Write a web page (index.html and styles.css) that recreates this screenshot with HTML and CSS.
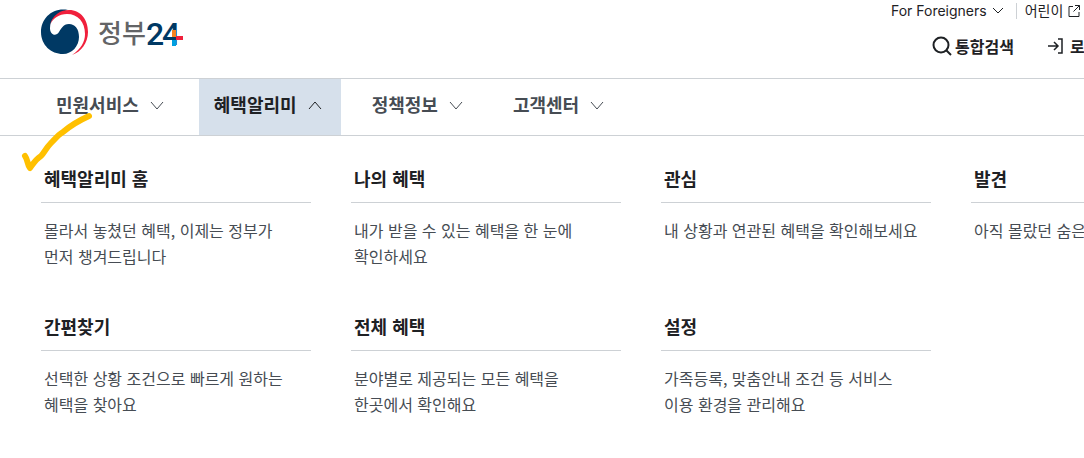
FILE: index.html
```html
<!DOCTYPE html>
<html lang="ko">
<head>
    <meta charset="UTF-8">
    <meta name="viewport" content="width=device-width, initial-scale=1.0">
    <title>정부24</title>
    <link rel="stylesheet" href="styles.css">
</head>
<body>
    <header class="header">
        <a href="#" class="logo">
            <svg class="logo-mark" viewBox="0 0 48 46" aria-hidden="true">
                <path fill="#003964" d="M27 1C12-2 0 9 0 23C0 36 10 45 22 45C31 45 38 37 38 28C38 20 34 15 28 15C22 15 20 20 18 23C15 28 9 26 9 19C9 10 16 4 27 1Z"/>
                <path fill="#f0203c" d="M9 16C12 5 20 1 28 1C40 1 47 11 47 23C47 34 40 43 31 46C40 40 44 33 44 25C44 13 37 5 26 5C18 5 12 9 9 16Z"/>
            </svg>
            <span class="logo-name">정부</span>
            <svg class="logo-number" viewBox="0 0 40 30" role="img" aria-label="24">
                <text class="logo-digits" y="28" x="0 16">24</text>
                <path fill="#f58220" d="M26 13h4v7h-4z"/>
                <path fill="#f0203c" d="M30 19h7v4h-7z"/>
                <path fill="#00a0e0" d="M26 23h4v6h-4z"/>
            </svg>
        </a>

        <div class="utils">
            <div class="util-top">
                <button type="button" class="util-link">For Foreigners
                    <svg class="icon-small" viewBox="0 0 12 12"><path d="M1 3l5 5 5-5"/></svg>
                </button>
                <a href="#" class="util-link util-kids">어린이
                    <svg class="icon-small" viewBox="0 0 12 12"><path d="M5 1.5H1v10h10V7M7 .5h4.5V5M11.5 .5l-6 6"/></svg>
                </a>
            </div>
            <div class="util-main">
                <button type="button" class="util-button">
                    <svg class="icon-search" viewBox="0 0 20 20"><circle cx="9" cy="9" r="7.5"/><path d="M14 14l5 5"/></svg>통합검색
                </button>
                <a href="#" class="util-button">
                    <svg class="icon-login" viewBox="0 0 18 18"><path d="M1 9h10M7 5l4 4-4 4M11 2h4v14h-4"/></svg>로그인
                </a>
            </div>
        </div>
    </header>

    <nav class="nav">
        <button type="button" class="nav-item">민원서비스
            <svg class="icon-arrow" viewBox="0 0 16 16"><path d="M2 4l6 7 6-7"/></svg>
        </button>
        <button type="button" class="nav-item active">혜택알리미
            <svg class="icon-arrow" viewBox="0 0 16 16"><path d="M2 11l6-7 6 7"/></svg>
        </button>
        <button type="button" class="nav-item">정책정보
            <svg class="icon-arrow" viewBox="0 0 16 16"><path d="M2 4l6 7 6-7"/></svg>
        </button>
        <button type="button" class="nav-item">고객센터
            <svg class="icon-arrow" viewBox="0 0 16 16"><path d="M2 4l6 7 6-7"/></svg>
        </button>
    </nav>

    <main class="menu">
        <!-- 체크 표시 -->
        <svg class="check" viewBox="0 0 80 66" aria-hidden="true">
            <path d="M73 6C62 11 54 16 47 22C42 25 39 29 35 33C30 38 28 43 25 46C20 49 17 54 14 58C11 54 12 50 9 46"/>
        </svg>

        <div class="menu-grid">
            <section class="menu-item">
                <h2><a href="#">혜택알리미 홈</a></h2>
                <p>몰라서 놓쳤던 혜택, 이제는 정부가<br>먼저 챙겨드립니다</p>
            </section>
            <section class="menu-item">
                <h2><a href="#">나의 혜택</a></h2>
                <p>내가 받을 수 있는 혜택을 한 눈에<br>확인하세요</p>
            </section>
            <section class="menu-item">
                <h2><a href="#">관심</a></h2>
                <p>내 상황과 연관된 혜택을 확인해보세요</p>
            </section>
            <section class="menu-item">
                <h2><a href="#">발견</a></h2>
                <p>아직 몰랐던 숨은 혜택</p>
            </section>
            <section class="menu-item">
                <h2><a href="#">간편찾기</a></h2>
                <p>선택한 상황 조건으로 빠르게 원하는<br>혜택을 찾아요</p>
            </section>
            <section class="menu-item">
                <h2><a href="#">전체 혜택</a></h2>
                <p>분야별로 제공되는 모든 혜택을<br>한곳에서 확인해요</p>
            </section>
            <section class="menu-item">
                <h2><a href="#">설정</a></h2>
                <p>가족등록, 맞춤안내 조건 등 서비스<br>이용 환경을 관리해요</p>
            </section>
        </div>
    </main>
</body>
</html>
```
FILE: styles.css
```css
* {
    box-sizing: border-box;
}
body {
    margin: 0;
    background-color: #fff;
    color: #1e2124;
    font-family: "Noto Sans CJK KR", sans-serif;
    font-size: 16px;
    overflow-x: hidden;
}
a {
    color: inherit;
    text-decoration: none;
}
button {
    border: none;
    padding: 0;
    background: none;
    color: inherit;
    font: inherit;
    cursor: pointer;
}
svg {
    flex: none;
    fill: none;
    stroke: currentColor;
}

/* 상단 영역 */
.header {
    display: flex;
    justify-content: space-between;
    height: 78px;
    padding-left: 41px;
    overflow: hidden;
}
.logo {
    display: flex;
    align-items: center;
    height: 46px;
    margin-top: 9px;
}
.logo svg {
    stroke: none;
}
.logo-mark {
    width: 48px;
    height: 46px;
}
.logo-name {
    margin-left: 9px;
    color: #636466;
    font-size: 26px;
    font-weight: 500;
    line-height: 46px;
}
.logo-number {
    width: 40px;
    height: 30px;
}
.logo-digits {
    fill: #003964;
    font-family: Roboto, sans-serif;
    font-size: 32px;
    font-weight: 500;
}
.utils {
    flex: 0 0 193px;
    min-width: 0;
    white-space: nowrap;
}
.util-top {
    display: flex;
    align-items: center;
    height: 22px;
}
.util-link {
    display: flex;
    align-items: center;
    gap: 5px;
    font-family: Inter, "Noto Sans CJK KR", sans-serif;
    font-size: 14px;
    line-height: 16px;
}
.util-kids {
    margin-left: 12px;
    padding-left: 8px;
    border-left: 1px solid #cdd1d5;
}
.util-main {
    display: flex;
    align-items: center;
    gap: 33px;
    height: 48px;
    padding-left: 41px;
}
.util-button {
    display: flex;
    align-items: center;
    gap: 3px;
    font-weight: 700;
}
.icon-small {
    width: 12px;
    height: 12px;
}
.icon-search {
    width: 20px;
    height: 20px;
    stroke-width: 2;
}
.icon-login {
    width: 18px;
    height: 18px;
    margin-right: 2px;
    stroke-width: 1.5;
}

/* 메인 메뉴 */
.nav {
    display: flex;
    height: 58px;
    padding-left: 41px;
    border-top: 1px solid #cdd1d5;
    border-bottom: 1px solid #cdd1d5;
}
.nav-item {
    display: flex;
    align-items: center;
    gap: 10px;
    margin-right: 16px;
    padding: 0 18px 6px 15px;
    color: #464c53;
    font-size: 18px;
    font-weight: 700;
}
.nav-item.active {
    background-color: #d6e0eb;
    color: #1e2124;
}
.icon-arrow {
    width: 16px;
    height: 16px;
    margin-top: 4px;
}

/* 하위 메뉴 */
.menu {
    position: relative;
    padding: 25px 0 0 41px;
}
.menu-grid {
    display: grid;
    grid-template-columns: repeat(4, 270px);
    gap: 40px;
}
.menu-item h2 {
    margin: 0 0 14px;
    padding: 0 3px 7px;
    border-bottom: 1px solid #cdd1d5;
    font-size: 18px;
    line-height: 34px;
}
.menu-item p {
    margin: 0;
    padding: 0 3px;
    color: #464c53;
    line-height: 26px;
}
.check {
    position: absolute;
    top: -26px;
    left: 16px;
    width: 80px;
    height: 66px;
    stroke: #ffc000;
    stroke-width: 6;
    stroke-linecap: round;
    stroke-linejoin: round;
}
```
